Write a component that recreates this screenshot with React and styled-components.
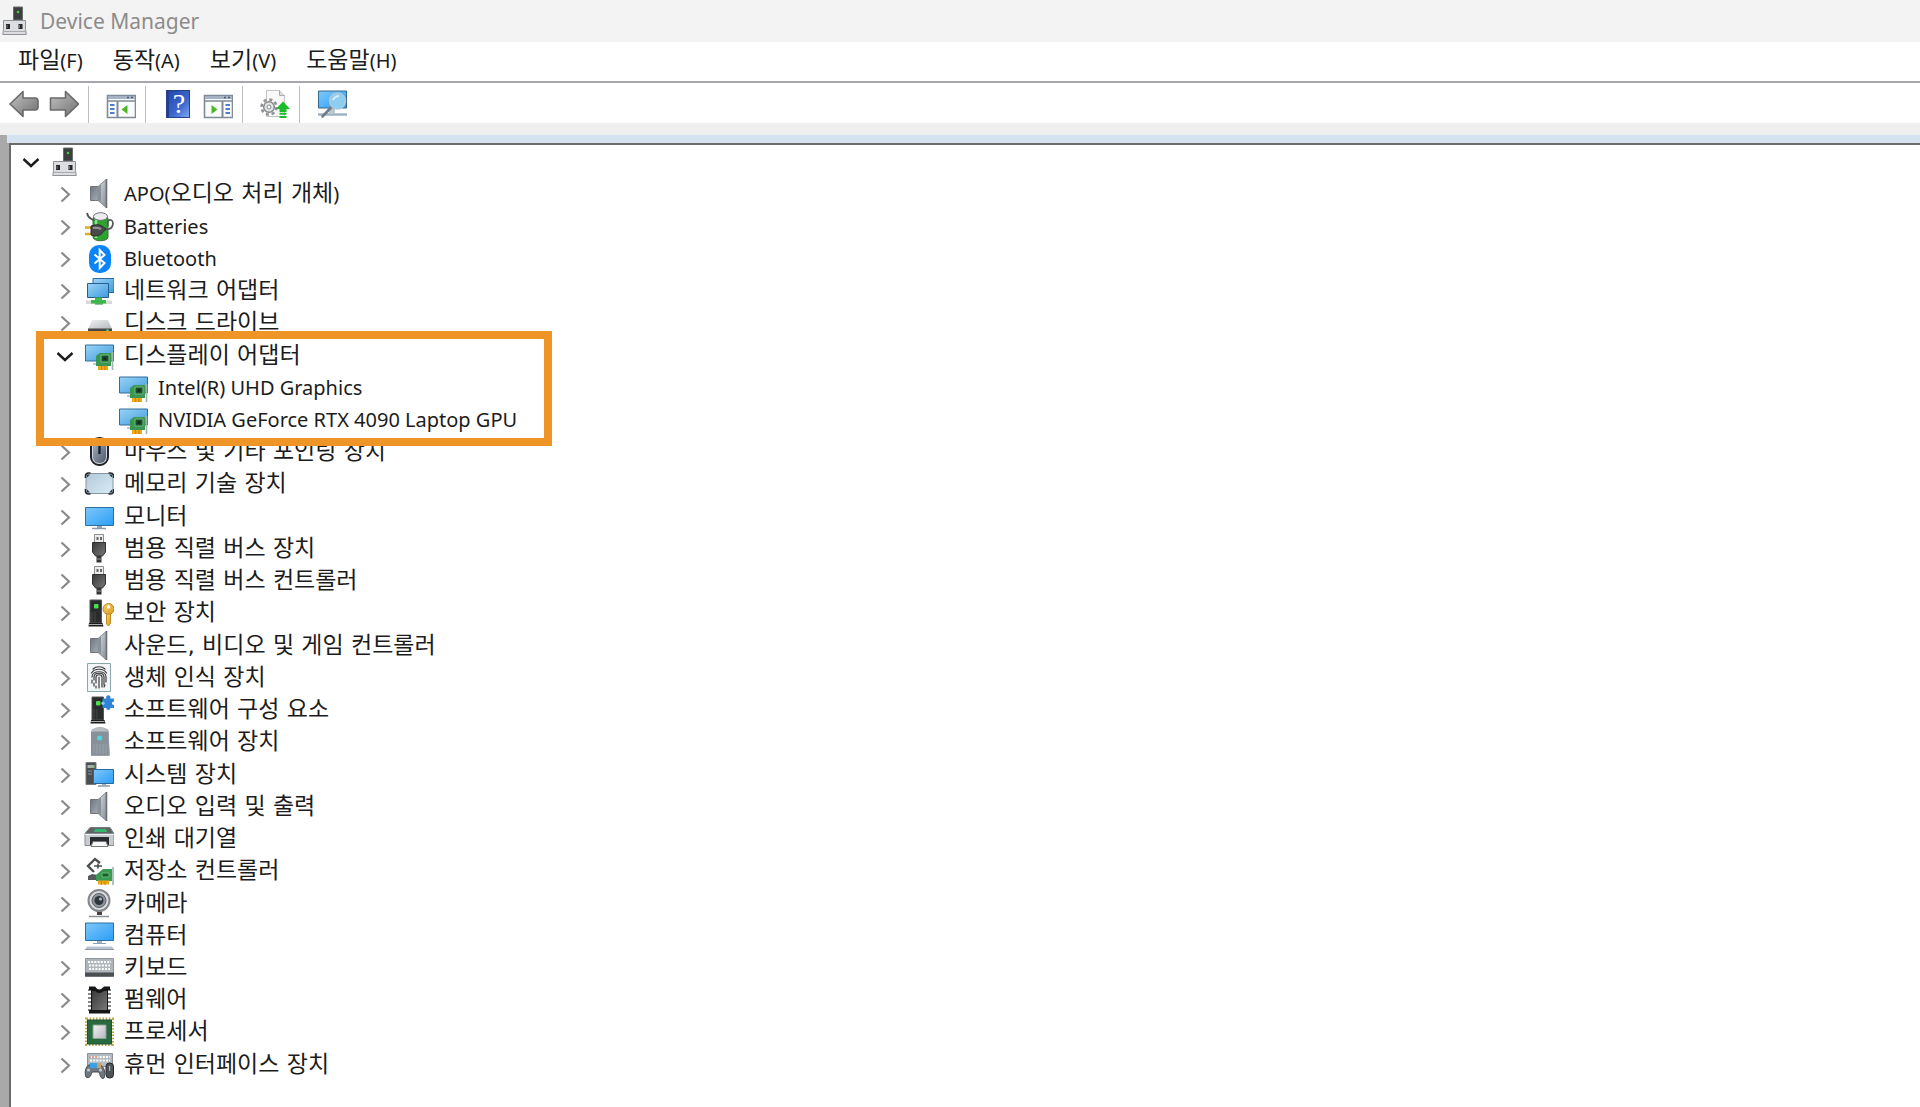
import React from "react";
import styled, { createGlobalStyle } from "styled-components";

const GlobalStyle = createGlobalStyle`
  * {
    box-sizing: border-box;
  }
  body {
    margin: 0;
    background: #ffffff;
    color: #1c1c1c;
    font-family: "DejaVu Sans", "Noto Sans CJK KR", sans-serif;
    font-size: 23px;
  }
  button {
    padding: 0;
    border: 0;
    background: none;
    color: inherit;
    font: inherit;
  }
`;

const Window = styled.div`
  display: flex;
  flex-direction: column;
  min-height: 100vh;
`;

const TitleBar = styled.header`
  display: flex;
  align-items: center;
  gap: 10px;
  height: 42px;
  background: #f3f3f3;
`;

const Title = styled.h1`
  margin: 0;
  color: #8c8c8c;
  font: 400 21px "Noto Sans", sans-serif;
`;

const MenuBar = styled.nav`
  display: flex;
  height: 41px;
  padding: 0 0 4px 3px;
  border-bottom: 2px solid #a5a7aa;
`;

const MenuItem = styled.button`
  padding: 0 15px;
  line-height: 32px;
  white-space: nowrap;
`;

const Latin = styled.span`
  font-family: "Noto Sans", sans-serif;
  font-size: 20px;
  line-height: 1;
`;

const ToolBar = styled.div`
  display: flex;
  align-items: center;
  height: 40px;
  padding: 2px 0 0 4px;
`;

const ToolButton = styled.button`
  display: flex;
  align-items: center;
  justify-content: center;
  width: 40px;
  height: 36px;
`;

const Separator = styled.span`
  align-self: flex-end;
  width: 1px;
  height: 37px;
  margin: 0 12px 0 4px;
  background: #bfbfbf;
`;

const Body = styled.main`
  display: flex;
  flex: 1;
  flex-direction: column;
  border-top: 12px solid #efefef;
  background: #a9a9a9;
`;

const Band = styled.div`
  height: 8px;
  margin-left: 7px;
  background: #d5e3f0;
`;

const Panel = styled.div`
  display: flex;
  flex: 1;
  margin-left: 9px;
  padding: 1px 0 26px;
  border-top: 2px solid #6b6b6b;
  border-left: 2px solid #6b6b6b;
  background: #ffffff;
`;

const Tree = styled.ul`
  display: flex;
  flex: ${(props) => props.$rows || 1};
  flex-direction: column;
  margin: 0;
  padding: 0;
  list-style: none;
`;

const Branch = styled.li`
  position: relative;
  display: flex;
  flex: ${(props) => props.$rows};
  flex-direction: column;
`;

const Row = styled.div`
  display: flex;
  flex: 1;
  align-items: center;
  min-height: 32px;
  padding-left: ${(props) => 5 + props.$level * 34}px;
  line-height: 30px;
  white-space: nowrap;
`;

const Toggle = styled.button`
  display: flex;
  align-items: center;
  justify-content: center;
  width: 30px;
  height: 30px;
  margin-right: 4px;
`;

const Spacer = styled.span`
  width: 34px;
`;

const Label = styled.span`
  height: 32px;
  margin-left: 10px;
`;

const Highlight = styled.div`
  position: absolute;
  z-index: 1;
  inset: -8px auto -10px 25px;
  width: 516px;
  border: 8px solid #ef9426;
  pointer-events: none;
`;

const Svg = styled.svg`
  display: block;
  flex: none;
`;

function Icon({ children, size = 30 }) {
  return (
    <Svg width={size} height={size} viewBox="0 0 30 30" fill="none" aria-hidden="true">
      {children}
    </Svg>
  );
}

// gradients shared by all the icons
function Gradients() {
  const list = {
    sky: ["#7fc8fb", "#2a9df4"],
    screen: ["#9ad4f8", "#3f9bdc"],
    steel: ["#6f757c", "#a9b0b8"],
    cone: ["#d9dce0", "#8b9199"],
    silver: ["#f1f2f3", "#b3b7bc"],
    slate: ["#a3b1c2", "#4d5b6c"],
    dark: ["#3a3a3a", "#777777"],
    arrow: ["#c4c4c4", "#6f6f6f"],
    ice: ["#b3c9d8", "#d8ebf6"],
    gold: ["#f8ce68", "#dd9a1f"],
  };
  return (
    <Svg width="0" height="0" aria-hidden="true">
      <defs>
        {Object.keys(list).map((id) => (
          <linearGradient id={id} key={id} x1="0" y1="0" x2="1" y2="1">
            <stop offset="0" stopColor={list[id][0]} />
            <stop offset="1" stopColor={list[id][1]} />
          </linearGradient>
        ))}
      </defs>
    </Svg>
  );
}

const ComputerRootIcon = () => (
  <Icon>
    <path d="M13.5 1h9v13h-9z" fill="#3b3f3d" stroke="#6a6d6b" />
    <circle cx="18" cy="6" r="1.3" fill="#3fd03f" />
    <path d="M3.5 14.5h22v9l.8 5H2.8l.7-5z" fill="#dcdde0" stroke="#8e9095" />
    <path d="M3 25.5h23" stroke="#a7a9ad" />
    <path d="M6 18h4v5H6zM18.500 18h4v5h-4z" fill="#26282b" />
    <path d="M7 19v3M19.500 19v3" stroke="#777" />
  </Icon>
);

const SpeakerIcon = () => (
  <Icon>
    <path d="M6.500 7.500H15v14H6.500z" fill="url(#steel)" stroke="#70757b" />
    <path d="M14 7.500L22 .5v28l-8-7z" fill="url(#cone)" stroke="#8b9096" />
    <path d="M14 8l3-2.500v18L14 21z" fill="#8a9097" />
    <path d="M22.500 0v29" stroke="#6d7278" strokeWidth="1.600" />
  </Icon>
);

const BatteryIcon = () => (
  <Icon>
    <path d="M9 7c0-7 15-7 15 0v18c0 5-15 5-15 0z" fill="#2ba52f" stroke="#3d6b3f" />
    <path d="M12 8v18" stroke="#8ee08d" strokeWidth="2.500" />
    <ellipse cx="16.500" cy="4.500" rx="7" ry="3.800" fill="#eeecf3" stroke="#75737c" />
    <path d="M3 1c1 6 5 5 7 8M22 17c8 1 8-8 5-9s-4 3-3 6" stroke="#555" strokeWidth="1.800" />
    <path d="M1 15.500h7M1 22h7" stroke="#d9ae22" strokeWidth="2.400" />
    <path d="M7 14l4-1c5-1 7 1 11 4-3 3-5 7-11 7l-4-1z" fill="#4a4a4d" stroke="#29292b" />
    <path d="M9 16c4-1 6 0 8 1" stroke="#98989b" strokeWidth="2" />
  </Icon>
);

const BluetoothIcon = () => (
  <Icon>
    <rect x="5" y="1" width="22" height="28" rx="10" fill="#0a84f8" />
    <path d="M10.500 10.500l10 8.500-4.800 5V6l4.800 5-10 8.500" stroke="#fff" strokeWidth="2" />
  </Icon>
);

const NetworkIcon = () => (
  <Icon>
    <path d="M9 2.500h21v14H9z" fill="url(#screen)" stroke="#2c6ea3" />
    <path d="M3.500 7.500h21v14h-21z" fill="url(#screen)" stroke="#255f91" />
    <path d="M11 21.500h7v3h-7z" fill="#3fc04c" />
    <path d="M2 24.500h26v3.500H2z" fill="#d6dbd7" />
    <path d="M7 24h15v3.500H7z" fill="#3cb84a" />
    <path d="M11 28h8" stroke="#218a31" />
  </Icon>
);

const DiskIcon = () => (
  <Icon>
    <path d="M8 12h16l4 9H4z" fill="url(#silver)" />
    <path d="M4 20.500h24v6H4z" fill="#45484b" />
    <circle cx="23.500" cy="22.500" r="1.200" fill="#4bdc55" />
  </Icon>
);

const DisplayIcon = () => (
  <Icon>
    <path d="M1.500 4h28v16h-28z" fill="url(#screen)" stroke="#346d98" />
    <path d="M9 23h8" stroke="#a9b6bf" strokeWidth="1.500" />
    <path d="M12 15l4-3h11v13H12z" fill="#3c9653" />
    <path d="M17 14h8v7h-8z" fill="#1d4f2c" stroke="#6cc07c" />
    <path d="M19.500 16h3v3h-3z" fill="#142f1c" />
    <path d="M14 25h10v4H14z" fill="#f0a818" />
    <path d="M17.500 25v4M21 25v4" stroke="#c9820c" />
    <path d="M28.500 11v18" stroke="#9cb5ac" strokeWidth="1.600" />
  </Icon>
);

const MouseIcon = () => (
  <Icon>
    <rect x="7" y="1" width="17" height="27" rx="8" fill="#cfd5dc" stroke="#202327" strokeWidth="2" />
    <rect x="9" y="3" width="13" height="23" rx="6" fill="url(#slate)" />
    <path d="M15.500 9v8" stroke="#1b2026" strokeWidth="2.400" />
  </Icon>
);

const MemoryIcon = () => (
  <Icon>
    <rect x="2" y="4.500" width="27" height="20" rx="2" fill="url(#ice)" stroke="#8796a2" />
    <path
      d="M1.500 9V7q0-3 3-3h2M24.500 4h2q3 0 3 3v2M29.500 20v2q0 3-3 3h-2M6.500 25h-2q-3 0-3-3v-2"
      stroke="#272b30"
      strokeWidth="1.600"
    />
    <path d="M3 5.500h3l-3 3zM28 5.500h-3l3 3zM28 23.500h-3l3-3zM3 23.500h3l-3-3z" fill="#30353b" />
  </Icon>
);

const MonitorIcon = () => (
  <Icon>
    <path d="M1.500 5.500h28v18h-28z" fill="url(#sky)" stroke="#2a6fa5" />
    <path d="M13 24h5v2h-5z" fill="#9aa7b2" />
    <path d="M8 26.500h14" stroke="#8c99a6" strokeWidth="1.500" />
  </Icon>
);

const UsbIcon = () => (
  <Icon>
    <path d="M10.500.5h9V9h-9z" fill="#ededed" stroke="#8d8d8d" />
    <path d="M12.500 3h2v3h-2zM16 3h2v3h-2z" fill="#666" />
    <path d="M8.500 8.500h13V18l-3 4h-7l-3-4z" fill="url(#dark)" stroke="#303030" />
    <path d="M12.500 22h5v6.500h-5z" fill="#333" />
    <path d="M12.500 25h5" stroke="#999" />
  </Icon>
);

const Tower = ({ x }) => (
  <>
    <path d={`M${x + 1} 2h11.500v23H${x + 1}z`} fill="#2b2c2c" stroke="#555" />
    <path d={`M${x + 3} 14v10M${x + 6} 14v10`} stroke="#494949" />
    <rect x={x + 5} y="6" width="4.500" height="4.500" rx="1" fill="#4be04e" />
    <path d={`M${x} 25h13.500l1 3.500h-15z`} fill="#1d1d1d" />
    <path d={`M${x} 26.500h13.500`} stroke="#aaa" />
  </>
);

const SecurityIcon = () => (
  <Icon>
    <Tower x={5} />
    <circle cx="24.500" cy="11" r="5.500" fill="url(#gold)" stroke="#c18a22" />
    <circle cx="24.500" cy="9" r="1.700" fill="#fff" />
    <path d="M22.500 16h4v9l-2 3-2-2z" fill="url(#gold)" stroke="#c18a22" />
  </Icon>
);

const FingerprintIcon = () => (
  <Icon>
    <path d="M3.500 .5h23v28h-23z" fill="#f2f5f5" stroke="#86aaa8" />
    <g stroke="#3a3d3e" strokeWidth="1.200" strokeLinecap="round">
      <path d="M9 6c3-3 9-3 12 0M7.500 10c3-5 12-5 15 0M8 14c0-7 14-7 14 0v5" />
      <path d="M10 17v-3c0-5 10-5 10 0v8M12 20v-6c0-3 6-3 6 0v10M15 14v11" />
      <path d="M8 17v3M10 20v3M12 23v2M20 24l1-2" />
    </g>
  </Icon>
);

const SoftwareComponentIcon = () => (
  <Icon>
    <Tower x={7} />
    <path d="M18.500 3.500H30V13H18.500z" fill="#2f86d6" />
    <circle cx="24.300" cy="2.500" r="2.200" fill="#2f86d6" />
    <circle cx="24.300" cy="13" r="2" fill="#2f86d6" />
    <circle cx="19" cy="8.200" r="1.700" fill="#8cc4f2" />
    <circle cx="29.700" cy="8.200" r="1.700" fill="#ffffff" />
  </Icon>
);

const SoftwareDeviceIcon = () => (
  <Icon>
    <path d="M8 3q8-5 16 0l1.500 25.500h-18z" fill="#8d959d" stroke="#a7adb3" />
    <path d="M7 4.500h17.500v24H7z" fill="#88919a" />
    <path d="M10 17v10M13 17v10M16 17v10M19 17v10M22 17v10" stroke="#99a1a9" />
    <path d="M7 4.500q9-8 17.500 0z" fill="#b9bec3" />
    <circle cx="15.700" cy="11" r="2.500" fill="#4fd7dc" />
  </Icon>
);

const SystemIcon = () => (
  <Icon>
    <path d="M2 2.500h10v22H2z" fill="#4a4e50" stroke="#767b7d" />
    <path d="M3.500 5h7v3h-7z" fill="#a8adae" />
    <path d="M4 11h4M4 14h4" stroke="#8e9496" />
    <circle cx="9" cy="6.500" r="1" fill="#45d648" />
    <path d="M9.500 9.500h20v14h-20z" fill="url(#sky)" stroke="#27689d" />
    <path d="M14 26h12" stroke="#8c99a6" strokeWidth="1.500" />
    <path d="M18 24h4v2h-4z" fill="#9fb0bd" />
  </Icon>
);

const PrinterIcon = () => (
  <Icon>
    <path d="M6 3.500h20l4 6H1z" fill="#5d6664" stroke="#777f7d" />
    <path d="M11 5h11l1 3H10z" fill="#36b56c" />
    <path d="M1 9.500h29v12H1z" fill="#c8ccd0" stroke="#858b90" />
    <path d="M6 13h19v8H6z" fill="#2a2d2f" />
    <path d="M9 17.500h13l2 5H7z" fill="#f6f7f8" stroke="#777" />
    <path d="M1 10.500h29" stroke="#eef0f1" />
  </Icon>
);

const StorageIcon = () => (
  <Icon>
    <path d="M16 7l-5-4-7 7 6 6" stroke="#4b4e50" strokeWidth="2.400" />
    <path d="M10 10h8M14 7.500v5" stroke="#4b4e50" strokeWidth="1.600" />
    <path d="M4 20l4-2 6 1v5H4z" fill="#55595b" />
    <path d="M12 19l7-6h9v12H12z" fill="#3a9a54" />
    <path d="M18 17h7v4h-7z" fill="#1c5b30" stroke="#5fbb73" />
    <path d="M14 24.500h11v4H14z" fill="#f0a818" />
    <path d="M17.500 25v4M21 25v4" stroke="#c9820c" />
    <path d="M29 11v18" stroke="#9cb5ac" strokeWidth="1.600" />
  </Icon>
);

const CameraIcon = () => (
  <Icon>
    <path d="M13 22h5v4h-5z" fill="#4a3f3f" />
    <path d="M5 27.500h20" stroke="#8e9296" strokeWidth="1.500" />
    <circle cx="15" cy="11.500" r="10.500" fill="#d9dadb" stroke="#85888b" strokeWidth="2" />
    <circle cx="15" cy="11.500" r="7" fill="#8d9399" stroke="#5c6065" />
    <circle cx="15" cy="11.500" r="4.500" fill="#30363d" />
    <circle cx="16.500" cy="10" r="1.600" fill="#9fb7cf" />
  </Icon>
);

const ComputerIcon = () => (
  <Icon>
    <path d="M1.500 2h28v17.500h-28z" fill="url(#sky)" stroke="#2a6fa5" />
    <path d="M13 20h5v2h-5z" fill="#a3b3bf" />
    <path d="M9 22.500h13" stroke="#8ba0b4" />
    <path d="M3 25.500h25l2 3H1z" fill="#b9c3cf" />
    <path d="M1 28.500h29" stroke="#8e99a6" />
  </Icon>
);

const KeyboardIcon = () => (
  <Icon>
    <path d="M1.500 5.500h28v18h-28z" fill="#aeb5bb" stroke="#8f969c" />
    <path d="M4 9h23M5 12.500h21M5 16h21" stroke="#fff" strokeWidth="2" strokeDasharray="2 1.200" />
    <path d="M1 19.500h29v4H1z" fill="#4a4f54" />
  </Icon>
);

const FirmwareIcon = () => (
  <Icon>
    <path
      d="M4 5h4M4 9h4M4 13h4M4 17h4M4 21h4M4 25h4M23 5h4M23 9h4M23 13h4M23 17h4M23 21h4M23 25h4"
      stroke="#83878a"
      strokeWidth="2"
    />
    <path d="M5 1.500h6q4 6 9 0h6V5h-2v20h2v3.500H5V25h2V5H5z" fill="#161616" />
    <path d="M8 6h3q4 4 9 0h3v19H8z" fill="url(#dark)" />
  </Icon>
);

const ProcessorIcon = () => (
  <Icon>
    <rect x="2.500" y="2" width="26" height="25.500" stroke="#c3a548" strokeWidth="3" strokeDasharray="1.500 1.700" />
    <path d="M3.500 3h24v24h-24z" fill="#28693f" stroke="#1c5431" />
    <path d="M9 8h13v13.500H9z" fill="url(#silver)" stroke="#86a08d" />
  </Icon>
);

const InputDeviceIcon = () => (
  <Icon>
    <path d="M3.500 3.500h25v13h-25z" fill="#b3bac0" stroke="#8a9197" />
    <path d="M6 7h20M6 10.500h20" stroke="#fff" strokeWidth="2" strokeDasharray="2 1.200" />
    <path d="M5 7h9" stroke="#d98f8b" strokeWidth="1.500" strokeDasharray="2 1.200" />
    <path
      d="M2 27c-2-5 0-11 3-12h11c4 1 6 8 4 13-3 2-4-3-5-6h-7c-1 4-3 7-6 5z"
      fill="#6f7780"
      stroke="#454b51"
    />
    <path d="M6 13h7v5H6z" fill="#38a1e6" />
    <path d="M13 13h4v5h-4z" fill="#c6a469" />
    <circle cx="4.500" cy="20" r="1.500" fill="#c7ccd1" />
    <circle cx="16.500" cy="20" r="1.500" fill="#c7ccd1" />
    <rect x="22" y="13" width="7.500" height="15" rx="3.500" fill="#4d5359" stroke="#22262a" />
    <path d="M25.700 16v5" stroke="#c9ced2" />
  </Icon>
);

const BackIcon = () => (
  <Icon>
    <path
      d="M1 15L14 2.500V9h12q3 0 3 3v6q0 3-3 3H14v6.500z"
      fill="url(#arrow)"
      stroke="#6a6a6a"
      strokeWidth="1.600"
      strokeLinejoin="round"
    />
  </Icon>
);

const ForwardIcon = () => (
  <Icon>
    <path
      d="M29.500 15L16.500 2.500V9h-15v12h15v6.500z"
      fill="url(#arrow)"
      stroke="#6a6a6a"
      strokeWidth="1.600"
      strokeLinejoin="round"
    />
  </Icon>
);

const WindowFrame = () => (
  <>
    <path d="M1.500 6.500h28v22h-28z" fill="#fbfcfd" stroke="#7e8b9b" strokeWidth="1.600" />
    <path d="M2 7h27v3H2z" fill="#a4b2c6" />
    <path d="M2 12h27" stroke="#7e8b9b" strokeWidth="1.500" />
    <path d="M21 8.500h2M25 8.500h2" stroke="#4f5d75" strokeWidth="1.500" />
  </>
);

const ConsoleTreeIcon = () => (
  <Icon>
    <WindowFrame />
    <path d="M11.500 12v16" stroke="#7e8b9b" strokeWidth="2" />
    <path d="M4 16h4.500M4 20h4.500M4 24h4.500" stroke="#4d7fc6" strokeWidth="1.800" />
    <path d="M21.500 16v9l-6-4.500z" fill="#4cb625" />
  </Icon>
);

const ActionPaneIcon = () => (
  <Icon>
    <WindowFrame />
    <path d="M19.500 12v16" stroke="#7e8b9b" strokeWidth="2" />
    <path d="M22.500 16h4.500M22.500 20h4.500M22.500 24h4.500" stroke="#4d7fc6" strokeWidth="1.800" />
    <path d="M8.500 16v9l6-4.500z" fill="#4cb625" />
  </Icon>
);

const HelpMark = styled.span`
  display: flex;
  align-items: center;
  justify-content: center;
  width: 24px;
  height: 28px;
  border: 1px solid #23408f;
  border-left-width: 3px;
  background: linear-gradient(135deg, #2747ad, #3d68cf 60%, #7ea6f2);
  color: #ffffff;
  font: 28px "Liberation Serif", serif;
`;

const UpdateDriverIcon = () => (
  <Icon>
    <path d="M6.500 1.500h13l5 5v21h-18z" fill="#f8f8f8" stroke="#c3c3c3" />
    <path d="M19.500 1.500v5h5" fill="#ddd" stroke="#a9a9a9" />
    <circle cx="9" cy="18" r="7.500" stroke="#8f9294" strokeWidth="2.500" strokeDasharray="3.200 2.690" />
    <circle cx="9" cy="18" r="5.300" fill="#e3e5e6" stroke="#85888a" strokeWidth="1.500" />
    <circle cx="9" cy="18" r="2" fill="#fff" stroke="#85888a" />
    <path d="M23 12.500l7 7.500h-3.500v3h-7v-3H16z" fill="#19bd27" />
    <path d="M19.500 24.800h7M19.500 28h7" stroke="#19bd27" strokeWidth="2" />
  </Icon>
);

const ScanIcon = () => (
  <Icon>
    <path d="M1.500 2h28v17h-28z" fill="url(#sky)" stroke="#35688c" />
    <path d="M1 25.500h29" stroke="#9db2c4" strokeWidth="2.500" />
    <path d="M12 20h6v5h-6z" fill="#b9c6d0" />
    <path d="M14.500 18l-9 9.500" stroke="#6e7d89" strokeWidth="2.600" strokeLinecap="round" />
    <circle cx="20.500" cy="12" r="7.800" fill="#8ecdf2" stroke="#a8c9dd" strokeWidth="1.800" />
    <path d="M16 11q2-4 6-4" stroke="#d3eefc" strokeWidth="2" />
  </Icon>
);

const Chevron = ({ open }) => (
  <Icon>
    {open ? (
      <path d="M7.500 12l7.500 7 7.500-7" stroke="#1d1d1d" strokeWidth="2.400" />
    ) : (
      <path d="M11.500 8.500l7.500 7-7.500 7" stroke="#8a8a8a" strokeWidth="2.200" />
    )}
  </Icon>
);

const menus = [
  { name: "파일", hotkey: "(F)" },
  { name: "동작", hotkey: "(A)" },
  { name: "보기", hotkey: "(V)" },
  { name: "도움말", hotkey: "(H)" },
];

const devices = {
  name: "",
  icon: ComputerRootIcon,
  children: [
    { name: "APO(오디오 처리 개체)", icon: SpeakerIcon },
    { name: "Batteries", icon: BatteryIcon },
    { name: "Bluetooth", icon: BluetoothIcon },
    { name: "네트워크 어댑터", icon: NetworkIcon },
    { name: "디스크 드라이브", icon: DiskIcon },
    {
      name: "디스플레이 어댑터",
      icon: DisplayIcon,
      highlighted: true,
      children: [
        { name: "Intel(R) UHD Graphics", icon: DisplayIcon },
        { name: "NVIDIA GeForce RTX 4090 Laptop GPU", icon: DisplayIcon },
      ],
    },
    { name: "마우스 및 기타 포인팅 장치", icon: MouseIcon },
    { name: "메모리 기술 장치", icon: MemoryIcon },
    { name: "모니터", icon: MonitorIcon },
    { name: "범용 직렬 버스 장치", icon: UsbIcon },
    { name: "범용 직렬 버스 컨트롤러", icon: UsbIcon },
    { name: "보안 장치", icon: SecurityIcon },
    { name: "사운드, 비디오 및 게임 컨트롤러", icon: SpeakerIcon },
    { name: "생체 인식 장치", icon: FingerprintIcon },
    { name: "소프트웨어 구성 요소", icon: SoftwareComponentIcon },
    { name: "소프트웨어 장치", icon: SoftwareDeviceIcon },
    { name: "시스템 장치", icon: SystemIcon },
    { name: "오디오 입력 및 출력", icon: SpeakerIcon },
    { name: "인쇄 대기열", icon: PrinterIcon },
    { name: "저장소 컨트롤러", icon: StorageIcon },
    { name: "카메라", icon: CameraIcon },
    { name: "컴퓨터", icon: ComputerIcon },
    { name: "키보드", icon: KeyboardIcon },
    { name: "펌웨어", icon: FirmwareIcon },
    { name: "프로세서", icon: ProcessorIcon },
    { name: "휴먼 인터페이스 장치", icon: InputDeviceIcon },
  ],
};

const countRows = (node) =>
  (node.children || []).reduce((sum, child) => sum + countRows(child), 1);

// Latin runs are set in their own, slightly smaller face
const renderName = (name) =>
  name
    .split(/([A-Za-z0-9()][A-Za-z0-9() ]*)/)
    .map((part, i) => (i % 2 ? <Latin key={i}>{part}</Latin> : part));

function Device({ node, level }) {
  const DeviceIcon = node.icon;
  const open = Boolean(node.children);
  return (
    <Branch $rows={countRows(node)}>
      <Row $level={level}>
        {level < 2 ? (
          <Toggle aria-expanded={open} aria-label={node.name || "Computer"}>
            <Chevron open={open} />
          </Toggle>
        ) : (
          <Spacer />
        )}
        <DeviceIcon />
        <Label>{renderName(node.name)}</Label>
      </Row>
      {open && (
        <Tree $rows={countRows(node) - 1}>
          {node.children.map((child) => (
            <Device key={child.name} node={child} level={level + 1} />
          ))}
        </Tree>
      )}
      {node.highlighted && <Highlight />}
    </Branch>
  );
}

export default function App() {
  return (
    <Window>
      <GlobalStyle />
      <Gradients />
      <TitleBar>
        <ComputerRootIcon />
        <Title>Device Manager</Title>
      </TitleBar>
      <MenuBar>
        {menus.map((menu) => (
          <MenuItem key={menu.name}>
            {menu.name}
            <Latin>{menu.hotkey}</Latin>
          </MenuItem>
        ))}
      </MenuBar>
      <ToolBar>
        <ToolButton aria-label="Back"><BackIcon /></ToolButton>
        <ToolButton aria-label="Forward"><ForwardIcon /></ToolButton>
        <Separator />
        <ToolButton aria-label="Console tree"><ConsoleTreeIcon /></ToolButton>
        <Separator />
        <ToolButton aria-label="Help"><HelpMark>?</HelpMark></ToolButton>
        <ToolButton aria-label="Action pane"><ActionPaneIcon /></ToolButton>
        <Separator />
        <ToolButton aria-label="Update driver"><UpdateDriverIcon /></ToolButton>
        <Separator />
        <ToolButton aria-label="Scan for hardware changes"><ScanIcon /></ToolButton>
      </ToolBar>
      <Body>
        <Band />
        <Panel>
          <Tree>
            <Device node={devices} level={0} />
          </Tree>
        </Panel>
      </Body>
    </Window>
  );
}
